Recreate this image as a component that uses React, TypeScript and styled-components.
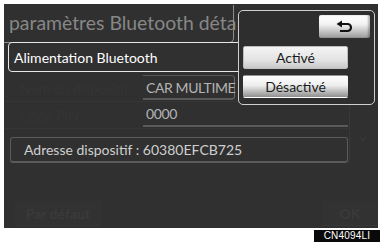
import React from "react";
import styled, { createGlobalStyle } from "styled-components";

const GlobalStyle = createGlobalStyle`
  html, body {
    margin: 0;
    padding: 0;
    background: #ffffff;
  }
  body {
    font-family: Lato, "Open Sans", "Liberation Sans", sans-serif;
  }
`;

export default function App() {
  return (
    <>
      <GlobalStyle />
      <Page>
        <Screen>
          <TitleBar>
            <Title>paramètres Bluetooth déta</Title>
          </TitleBar>

          <PowerRow>
            <PowerLabel>Alimentation Bluetooth</PowerLabel>
          </PowerRow>

          <List>
            <Rows>
              <FieldRow>
                <FaintLabel>Nom du dispositif</FaintLabel>
                <ValueBox boxed>CAR MULTIME</ValueBox>
              </FieldRow>
              <FieldRow>
                <FaintLabel>Code PIN</FaintLabel>
                <ValueBox>0000</ValueBox>
              </FieldRow>
              <AddressRow>Adresse dispositif : 60380EFCB725</AddressRow>
            </Rows>
            <ScrollBar>
              <ScrollArrow>
                <svg width="8" height="8" viewBox="0 0 8 8">
                  <path d="M1 2 L4 6 L7 2" fill="none" stroke="#383838" strokeWidth="1.5" />
                </svg>
              </ScrollArrow>
            </ScrollBar>
          </List>

          <Footer>
            <FaintButton>Par défaut</FaintButton>
            <FaintButton narrow>OK</FaintButton>
          </Footer>

          <Popup>
            <PopupTop>
              <BackButton aria-label="retour">
                <svg width="17" height="13" viewBox="0 0 17 13">
                  <polygon points="0.5,4 6,0.5 6,7.5" fill="#111" />
                  <path
                    d="M5 4 H11.5 A3.5 3.5 0 0 1 11.5 11 H4"
                    fill="none"
                    stroke="#111"
                    strokeWidth="2.2"
                  />
                </svg>
              </BackButton>
            </PopupTop>
            <ChoiceButton selected>Activé</ChoiceButton>
            <ChoiceButton>Désactivé</ChoiceButton>
          </Popup>
        </Screen>
        <TagRow>
          <Tag>CN4094LI</Tag>
        </TagRow>
      </Page>
    </>
  );
}

/** Styled Component */
const Page = styled.div`
  width: 381px;
  height: 242px;
  display: flex;
  flex-direction: column;
  overflow: hidden;
`;

const Screen = styled.div`
  position: relative;
  margin: 4px 0 0 4px;
  width: 374px;
  height: 224px;
  background: #303030;
  display: flex;
  flex-direction: column;
  overflow: hidden;
`;

const TitleBar = styled.div`
  width: 230px;
  height: 38px;
  margin-top: 1px;
  border-right: 1px solid #8c8c8c;
  border-bottom: 1px solid #8c8c8c;
  border-bottom-right-radius: 5px;
  display: flex;
  align-items: center;
  padding-left: 5px;
  box-sizing: border-box;
`;

const Title = styled.div`
  color: #878787;
  font-size: 19.4px;
  white-space: nowrap;
  padding-bottom: 2px;
`;

const PowerRow = styled.div`
  margin: -1px 0 0 4px;
  width: 240px;
  height: 30px;
  box-sizing: border-box;
  border: 1.5px solid #e6e6e6;
  border-radius: 4px;
  display: flex;
  align-items: center;
  padding-left: 5px;
`;

const PowerLabel = styled.div`
  color: #ffffff;
  font-size: 14px;
`;

const List = styled.div`
  display: flex;
  margin-top: 3px;
`;

const Rows = styled.div`
  width: 344px;
  display: flex;
  flex-direction: column;
`;

const FieldRow = styled.div`
  height: 27px;
  display: flex;
  align-items: stretch;
  border-bottom: 1px solid #363636;
  box-sizing: border-box;
`;

const FaintLabel = styled.div`
  width: 139px;
  padding-left: 16px;
  box-sizing: border-box;
  color: #343434;
  font-size: 14px;
  display: flex;
  align-items: center;
  white-space: nowrap;
`;

const ValueBox = styled.div<{ boxed?: boolean }>`
  flex: 1;
  display: flex;
  align-items: center;
  padding-left: 3px;
  color: #b4b4b4;
  font-size: 14px;
  letter-spacing: -0.4px;
  white-space: nowrap;
  border-bottom: 2px solid #5a5a5a;
  margin-bottom: 1px;
  ${(p) =>
    p.boxed &&
    `
    max-width: 92px;
    border-right: 1px solid #6a6a6a;
    border-top: 1px solid #555;
    border-top-right-radius: 4px;
    border-bottom-right-radius: 4px;
    box-sizing: border-box;
  `}
`;

const AddressRow = styled.div`
  margin: 8px 0 0 6px;
  height: 26px;
  box-sizing: border-box;
  border: 1px solid #5a5a5a;
  border-bottom-width: 2px;
  border-radius: 3px;
  display: flex;
  align-items: center;
  padding-left: 13px;
  color: #cfcfcf;
  font-size: 14px;
`;

const ScrollBar = styled.div`
  width: 26px;
  margin-left: 1px;
  border-left: 1px solid #383838;
  display: flex;
  align-items: center;
  justify-content: center;
  padding-top: 40px;
`;

const ScrollArrow = styled.div`
  display: flex;
`;

const Footer = styled.div`
  margin-top: auto;
  margin-bottom: 2px;
  display: flex;
  justify-content: space-between;
  padding: 0 0 0 11px;
`;

const FaintButton = styled.div<{ narrow?: boolean }>`
  width: ${(p) => (p.narrow ? "56px" : "86px")};
  height: 24px;
  background: #323232;
  border-bottom: 1px solid #373737;
  color: #3a3a3a;
  font-size: 14px;
  font-weight: 700;
  display: flex;
  align-items: center;
  justify-content: center;
`;

const Popup = styled.div`
  position: absolute;
  left: 234px;
  top: 6px;
  width: 137px;
  height: 95px;
  box-sizing: border-box;
  background: #2e2e2e;
  border: 1.5px solid #cfcfcf;
  border-radius: 5px;
  padding: 4px 26px 0 4px;
  display: flex;
  flex-direction: column;
  gap: 6px;
`;

const PopupTop = styled.div`
  display: flex;
  justify-content: flex-end;
  margin-right: -22px;
  margin-bottom: 2px;
`;

const BackButton = styled.div`
  width: 51px;
  height: 23px;
  border-radius: 2px;
  background: linear-gradient(#ffffff 0%, #f2f2f2 40%, #9a9a9a 100%);
  box-shadow: inset -2px 0 2px rgba(0, 0, 0, 0.25);
  display: flex;
  align-items: center;
  justify-content: center;
`;

const ChoiceButton = styled.div<{ selected?: boolean }>`
  height: 23px;
  border-radius: 2px;
  background: ${(p) =>
    p.selected
      ? "linear-gradient(#f4f4f4 0%, #e4e4e4 60%, #c8c8c8 100%)"
      : "linear-gradient(#ffffff 0%, #ededed 45%, #8f8f8f 100%)"};
  border: 1px solid ${(p) => (p.selected ? "#bdbdbd" : "transparent")};
  box-sizing: border-box;
  color: #1a1a1a;
  font-size: 14px;
  display: flex;
  align-items: center;
  justify-content: center;
`;

const TagRow = styled.div`
  display: flex;
  justify-content: flex-end;
  margin-top: 2px;
  padding-right: 1px;
`;

const Tag = styled.div`
  width: 66px;
  height: 12px;
  background: #0a0a0a;
  color: #ffffff;
  font-family: "Liberation Sans", Arial, sans-serif;
  font-size: 10px;
  line-height: 12px;
  text-align: center;
  letter-spacing: 0.2px;
`;
